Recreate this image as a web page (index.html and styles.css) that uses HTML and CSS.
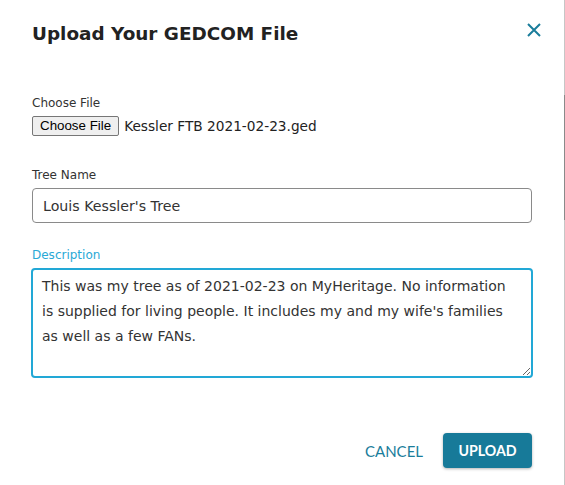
FILE: index.html
```html
<!DOCTYPE html>
<html>
<head>
<meta charset="utf-8">
<link rel="stylesheet" href="styles.css">
</head>
<body>
<div class="dialog">
  <div class="header">
    <h1 class="title">Upload Your GEDCOM File</h1>
    <button class="close" aria-label="Close">
      <svg width="14" height="14" viewBox="0 0 14 14"><path d="M1 1L13 13M13 1L1 13" stroke="#1a7d9b" stroke-width="2" fill="none"/></svg>
    </button>
  </div>
  <div class="body">
    <div class="field">
      <label class="label">Choose File</label>
      <div class="file-row">
        <span class="file-btn">Choose File</span>
        <span class="file-name">Kessler FTB 2021-02-23.ged</span>
      </div>
    </div>
    <div class="field field-name">
      <label class="label">Tree Name</label>
      <input class="input" type="text" value="Louis Kessler's Tree">
    </div>
    <div class="field field-desc">
      <label class="label label-active">Description</label>
      <textarea class="textarea">This was my tree as of 2021-02-23 on MyHeritage. No information is supplied for living people. It includes my and my wife's families as well as a few FANs.</textarea>
    </div>
  </div>
  <div class="footer">
    <button class="btn-text">CANCEL</button>
    <button class="btn-primary">UPLOAD</button>
  </div>
  <div class="scroll-track"><div class="scroll-thumb"></div></div>
</div>
</body>
</html>
```
FILE: styles.css
```css
* { box-sizing: border-box; }
html, body { margin: 0; padding: 0; background: #fff; }
body { font-family: "DejaVu Sans", Verdana, sans-serif; color: #333; }
.dialog {
  position: relative;
  width: 565px;
  height: 485px;
  padding: 0 33px 0 32px;
  display: flex;
  flex-direction: column;
}
.header {
  display: flex;
  justify-content: space-between;
  align-items: flex-start;
  padding-top: 22px;
  height: 95px;
}
.title {
  margin: 0;
  font-size: 18.4px;
  font-weight: bold;
  color: #222;
  line-height: 24px;
}
.close {
  border: 0;
  background: none;
  padding: 0;
  margin: 1px -9px 0 0;
  width: 14px;
  height: 14px;
  display: flex;
}
.body { display: flex; flex-direction: column; }
.field { display: flex; flex-direction: column; }
.label { font-size: 12px; line-height: 16px; color: #333; margin-bottom: 5px; }
.label-active { color: #29a9d6; }
.file-row { display: flex; align-items: center; gap: 5px; height: 20px; }
.file-btn {
  font-family: "Liberation Sans", Arial, sans-serif;
  font-size: 13.33px;
  color: #000;
  background: #efefef;
  border: 1px solid #767676;
  border-radius: 2px;
  padding: 0 7px;
  height: 20px;
  line-height: 18px;
}
.file-name { font-size: 13.7px; color: #222; }
.field-name { margin-top: 31px; }
.field-desc { margin-top: 24px; }
.input {
  width: 500px;
  height: 35px;
  border: 1px solid #8a8a8a;
  border-radius: 4px;
  padding: 0 10px;
  font-family: "DejaVu Sans", Verdana, sans-serif;
  font-size: 14.2px;
  color: #333;
  outline: none;
}
.textarea {
  width: 502px;
  margin-left: -1px;
  height: 110px;
  border: 2px solid #22a8d6;
  border-radius: 4px;
  padding: 4px 16px 4px 9px;
  font-family: "DejaVu Sans", Verdana, sans-serif;
  font-size: 14px;
  line-height: 25px;
  color: #333;
  resize: vertical;
  outline: none;
}
.footer {
  margin-top: auto;
  margin-bottom: 17px;
  display: flex;
  justify-content: flex-end;
  align-items: center;
  gap: 20px;
}
.btn-text {
  border: 0;
  background: none;
  font-family: Lato, sans-serif;
  font-size: 15px;
  color: #1a7d9b;
  padding: 0;
}
.btn-primary {
  border: 0;
  background: #177a99;
  color: #fff;
  font-family: Lato, sans-serif;
  font-weight: bold;
  font-size: 14.2px;
  width: 89px;
  height: 35px;
  border-radius: 4px;
  box-shadow: 0 1px 3px rgba(0,0,0,0.3);
}
.scroll-track {
  position: absolute;
  right: 0;
  top: 0;
  bottom: 0;
  width: 1px;
  background: #c6c6c6;
}
.scroll-thumb {
  position: absolute;
  left: 0;
  top: 95px;
  height: 125px;
  width: 1px;
  background: #8a8a8a;
}
```
